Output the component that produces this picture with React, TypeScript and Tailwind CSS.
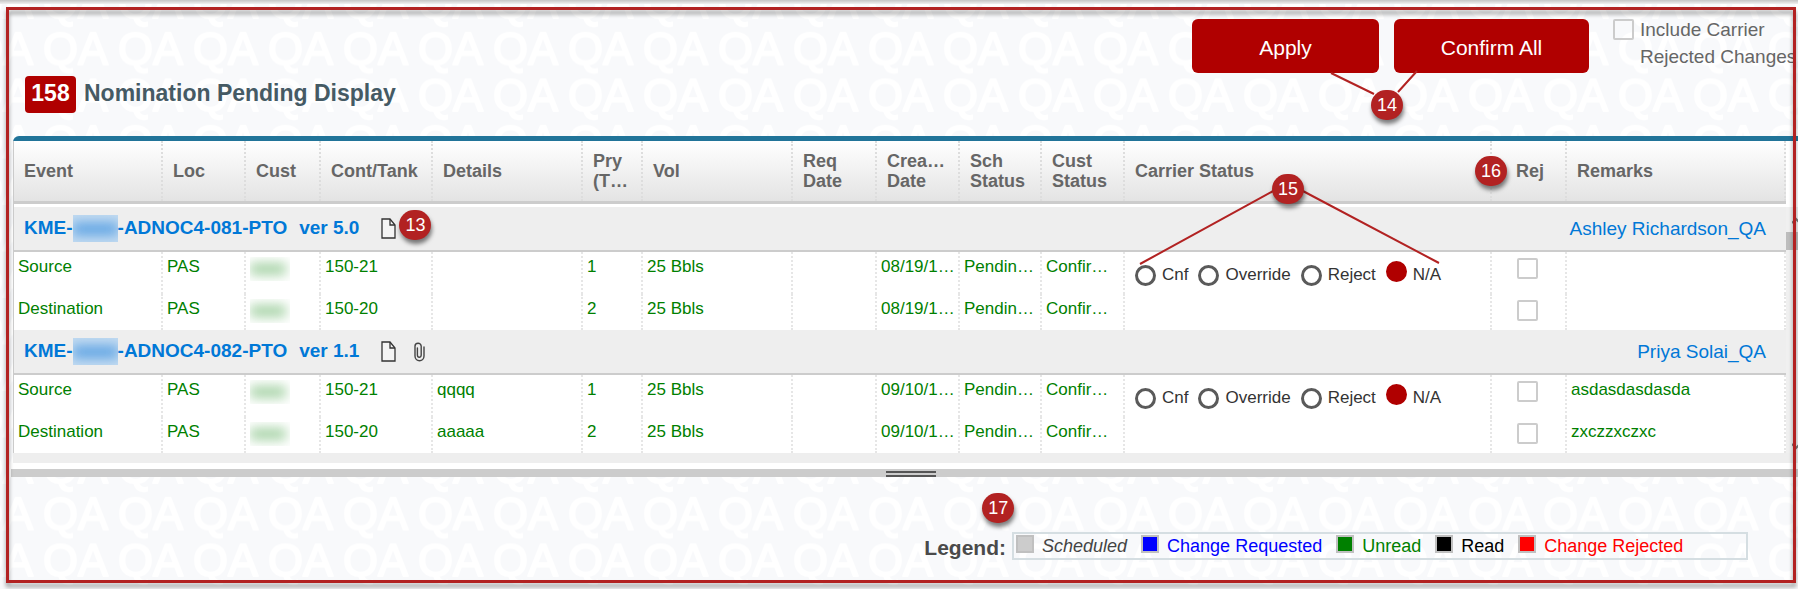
import React from "react"
import { clsx } from "clsx"

type Leg = {
  event: string
  loc: string
  tank: string
  details?: string
  pry: string
  vol: string
  created: string
  remarks?: string
}

type Nomination = {
  id: string
  version: string
  owner: string
  hasAttachment?: boolean
  callout?: string
  legs: Leg[]
}

const COLUMNS = [
  { label: "Event", width: "w-[149px]" },
  { label: "Loc", width: "w-[83px]" },
  { label: "Cust", width: "w-[75px]" },
  { label: "Cont/Tank", width: "w-[112px]" },
  { label: "Details", width: "w-[150px]" },
  { label: "Pry (T…", width: "w-[60px]" },
  { label: "Vol", width: "w-[150px]" },
  { label: "Req Date", width: "w-[84px]" },
  { label: "Crea… Date", width: "w-[83px]" },
  { label: "Sch Status", width: "w-[82px]" },
  { label: "Cust Status", width: "w-[83px]" },
  { label: "Carrier Status", width: "w-[367px]" },
  { label: "Rej", width: "w-[75px]" },
  { label: "Remarks", width: "" },
]

const NOMINATIONS: Nomination[] = [
  {
    id: "-ADNOC4-081-PTO",
    version: "ver 5.0",
    owner: "Ashley Richardson_QA",
    callout: "13",
    legs: [
      { event: "Source", loc: "PAS", tank: "150-21", pry: "1", vol: "25 Bbls", created: "08/19/1…" },
      { event: "Destination", loc: "PAS", tank: "150-20", pry: "2", vol: "25 Bbls", created: "08/19/1…" },
    ],
  },
  {
    id: "-ADNOC4-082-PTO",
    version: "ver 1.1",
    owner: "Priya Solai_QA",
    hasAttachment: true,
    legs: [
      { event: "Source", loc: "PAS", tank: "150-21", details: "qqqq", pry: "1", vol: "25 Bbls", created: "09/10/1…", remarks: "asdasdasdasda" },
      { event: "Destination", loc: "PAS", tank: "150-20", details: "aaaaa", pry: "2", vol: "25 Bbls", created: "09/10/1…", remarks: "zxczzxczxc" },
    ],
  },
]

const CARRIER_OPTIONS = ["Cnf", "Override", "Reject", "N/A"]

const LEGEND = [
  { label: "Scheduled", swatch: "bg-[#cccccc]", text: "text-[#444444] italic" },
  { label: "Change Requested", swatch: "bg-[#0000ff]", text: "text-[#0000ff]" },
  { label: "Unread", swatch: "bg-[#008000]", text: "text-[#008000]" },
  { label: "Read", swatch: "bg-black", text: "text-black" },
  { label: "Change Rejected", swatch: "bg-[#ff0000]", text: "text-[#ff0000]" },
]

const CHECKBOX =
  "block size-[21px] shrink-0 appearance-none rounded-xs border-2 border-[#cccccc] checked:bg-[#b00000]"

export default function App() {
  return (
    <div className="relative isolate flex min-h-screen flex-col overflow-hidden bg-[#f8f9fb] font-['Liberation_Sans',Arial,sans-serif] text-[#666666]">
      <Watermark />
      <Header />
      <main className="relative">
        <NominationTable />
        <Splitter />
      </main>
      <Legend />
      <div className="pointer-events-none absolute inset-x-0 top-0 h-1 bg-gradient-to-b from-[#c4c4c4] to-[#f0f0f0]" />
      <div className="pointer-events-none absolute top-[7px] right-[2px] bottom-[7px] left-[6px] border-3 border-[#b22222] drop-shadow-[0_4px_2px_rgba(0,0,0,0.4)]" />
    </div>
  )
}

function Watermark() {
  return (
    <svg className="absolute inset-0 -z-10 size-full" aria-hidden="true">
      <defs>
        <pattern id="qa" x="42" y="20" width="75" height="46.5" patternUnits="userSpaceOnUse">
          <text
            x="1"
            y="45"
            fontSize="45"
            fill="#fff"
            stroke="#fff"
            strokeWidth="2"
            strokeLinejoin="round"
          >
            QA
          </text>
          <text x="1" y="-1.5" fontSize="45" fill="#fff" stroke="#fff" strokeWidth="2">
            QA
          </text>
        </pattern>
      </defs>
      <rect width="100%" height="100%" fill="url(#qa)" />
    </svg>
  )
}

function Callout({ label, className }: { label: string; className?: string }) {
  return (
    <span
      className={clsx(
        "absolute z-20 flex h-[30px] w-8 items-center justify-center rounded-full bg-[#b22222] text-lg font-normal text-white shadow-[1px_4px_4px_rgba(0,0,0,0.5)]",
        className
      )}
    >
      {label}
    </span>
  )
}

function Header() {
  return (
    <header className="pt-[19px] pb-[23px]">
      <div className="flex justify-end">
        <div className="relative flex gap-[15px] text-[21px] text-white">
          <button className="h-[54px] w-[187px] rounded-md bg-[#b00000] pt-1">Apply</button>
          <button className="h-[54px] w-[195px] rounded-md bg-[#b00000] pt-1">Confirm All</button>
          <svg
            className="pointer-events-none absolute top-0 left-0 z-10 h-[90px] w-full"
            stroke="#b22222"
            strokeWidth="2"
            aria-hidden="true"
          >
            <path d="M139 54 L182 75 M225 52 L206 73" />
          </svg>
          <Callout label="14" className="top-[71px] left-[179px]" />
        </div>
        <label className="ml-6 flex w-[185px] gap-[6px] text-[19px] leading-[27px] whitespace-nowrap">
          <input type="checkbox" className={CHECKBOX} />
          <span className="-mt-[3px]">
            Include Carrier
            <br />
            Rejected Changes
          </span>
        </label>
      </div>
      <div className="mt-[3px] flex items-center gap-2 pl-[25px] text-[23px] font-bold">
        <span className="flex h-[37px] w-[51px] items-center justify-center rounded bg-[#b00000] pb-[2px] text-white">
          158
        </span>
        <h1 className="pb-[2px] text-[#455a64]">Nomination Pending Display</h1>
      </div>
    </header>
  )
}

function NominationTable() {
  return (
    <div className="ml-[13px] rounded-tl-md border-t-5 border-[#217499] bg-white pb-[6px]">
      <div className="flex">
        <table className="w-full table-fixed border-separate border-spacing-0 border-l border-[#cccccc] text-left">
          <thead>
            <tr className="h-[63px] bg-gradient-to-b from-white to-[#e2e2e2]">
              {COLUMNS.map(({ label, width }) => (
                <th
                  key={label}
                  className={clsx(
                    "relative border-b-3 border-[#cccccc] text-lg leading-5 font-bold",
                    width,
                    label === "Rej" ? "pl-6" : "px-[10px]",
                    label === "Cont/Tank" && "whitespace-nowrap"
                  )}
                >
                  {label}
                  <span className="absolute inset-y-0 right-0 border-r-2 border-dotted border-[#dddddd]" />
                  {label === "Carrier Status" && <CarrierCallout />}
                  {label === "Rej" && <Callout label="16" className="top-[15px] -left-[17px]" />}
                </th>
              ))}
            </tr>
          </thead>
          <tbody>
            {NOMINATIONS.map((nomination, i) => (
              <NominationGroup key={nomination.id} nomination={nomination} first={i === 0} />
            ))}
          </tbody>
        </table>
        <Scrollbar />
      </div>
      <div className="h-[10px] bg-[#eeeeee]" />
    </div>
  )
}

function CarrierCallout() {
  return (
    <>
      <svg
        className="pointer-events-none absolute top-0 left-0 z-10 h-[130px] w-[330px]"
        stroke="#b22222"
        strokeWidth="2"
        aria-hidden="true"
      >
        <path d="M150 49 L15 123 M176 49 L314 122" />
      </svg>
      <Callout label="15" className="top-[33px] left-[147px]" />
    </>
  )
}

function NominationGroup({ nomination, first }: { nomination: Nomination; first: boolean }) {
  return (
    <>
      <tr>
        <td
          colSpan={COLUMNS.length}
          className={clsx(
            "border-b-2 border-b-[#cccccc] bg-[#eeeeee] p-0 text-[19px]",
            first && "border-t-3 border-t-white"
          )}
        >
          <div className="flex h-[43px] items-center pr-5 pl-[10px]">
            <a href="#" className="flex items-center font-bold text-[#0078d7]">
              KME-
              <Redacted tone="blue" />
              {nomination.id}
              <span className="ml-3">{nomination.version}</span>
            </a>
            <div className="relative ml-[22px] flex items-center gap-[18px]">
              <FileIcon />
              {nomination.hasAttachment && <ClipIcon />}
              {nomination.callout && (
                <Callout label={nomination.callout} className="-top-2 left-[18px]" />
              )}
            </div>
            <a href="#" className="ml-auto pt-[2px] text-[#0078d7]">
              {nomination.owner}
            </a>
          </div>
        </td>
      </tr>
      {nomination.legs.map((leg, i) => (
        <LegRow key={leg.event} leg={leg} group={nomination.id} first={i === 0} />
      ))}
    </>
  )
}

function LegRow({ leg, group, first }: { leg: Leg; group: string; first: boolean }) {
  const cell =
    "overflow-hidden border-r-2 border-dotted border-[#e6e6e6] bg-white pt-[5px] pl-1 align-top whitespace-nowrap"
  return (
    <tr className={clsx("text-[17px] leading-5 text-[#008000]", first ? "h-[42px]" : "h-9")}>
      <td className={cell}>{leg.event}</td>
      <td className={cell}>{leg.loc}</td>
      <td className={cell}>
        <Redacted tone="green" />
      </td>
      <td className={cell}>{leg.tank}</td>
      <td className={cell}>{leg.details}</td>
      <td className={cell}>{leg.pry}</td>
      <td className={cell}>{leg.vol}</td>
      <td className={cell} />
      <td className={cell}>{leg.created}</td>
      <td className={cell}>Pendin…</td>
      <td className={cell}>Confir…</td>
      <td className={clsx(cell, "text-[#333333]")}>
        {first && <CarrierStatus name={`carrier${group}`} />}
      </td>
      <td className={cell}>
        <input
          type="checkbox"
          aria-label={`Reject ${leg.event}`}
          className={clsx(CHECKBOX, "mt-px ml-[21px]")}
        />
      </td>
      <td className={cell}>{leg.remarks}</td>
    </tr>
  )
}

function CarrierStatus({ name }: { name: string }) {
  return (
    <div className="flex gap-[10px] pt-1 pl-[6px]">
      {CARRIER_OPTIONS.map((option) => (
        <label key={option} className="flex h-[25px] items-center gap-[6px]">
          <input
            type="radio"
            name={name}
            defaultChecked={option === "N/A"}
            className="size-[21px] appearance-none self-end rounded-full border-3 border-[#5a5a5a] checked:self-start checked:border-[#b00000] checked:bg-[#b00000]"
          />
          <span className="pt-[2px]">{option}</span>
        </label>
      ))}
    </div>
  )
}

/** Blurred out company code */
function Redacted({ tone }: { tone: "blue" | "green" }) {
  return tone === "blue" ? (
    <span className="flex h-[27px] w-[45px] items-center overflow-hidden bg-[#c3dbf1]">
      <span className="h-3 w-full bg-[#5ca2e3] blur-[6px]" />
    </span>
  ) : (
    <span className="flex h-6 w-10 items-center overflow-hidden bg-white">
      <span className="h-3 w-9 bg-[#a5d2a5] blur-[6px]" />
    </span>
  )
}

function FileIcon() {
  return (
    <svg width="15" height="21" viewBox="0 0 15 21" fill="none" stroke="#333" strokeWidth="1.3" aria-hidden="true">
      <path d="M1 1 H9 L14 7 V20 H1 Z" fill="#f4f4f4" />
      <path d="M9 1 V7 H14" />
    </svg>
  )
}

function ClipIcon() {
  return (
    <svg width="11" height="20" viewBox="0 0 11 20" fill="none" stroke="#444" strokeWidth="1.4" strokeLinecap="round" aria-hidden="true">
      <path d="M3.4 6 V13 C3.4 16 7.2 16 7.2 13 V4.2 C7.2 0.2 1 0.2 1 4.2 V14 C1 20.4 10 20.4 10 14 V5" />
    </svg>
  )
}

function Scrollbar() {
  return (
    <div className="mt-[66px] w-3 shrink-0 overflow-hidden bg-[#f0f0f0]" aria-hidden="true">
      <div className="h-[25px]">
        <svg className="ml-[6px] h-[25px] w-3" fill="none" stroke="#777" strokeWidth="2">
          <path d="M0 16 L4 12 L8 16" />
        </svg>
      </div>
      <div className="h-[18px] bg-[#bdbdbd]" />
      <svg className="mt-[190px] ml-[6px] h-3 w-3" fill="none" stroke="#777" strokeWidth="2">
        <path d="M0 4 L4 8 L8 4" />
      </svg>
    </div>
  )
}

function Splitter() {
  return (
    <div className="ml-[11px] flex h-2 justify-center bg-[#cccccc] pl-3">
      <div className="mt-[2px] h-[6px] w-[50px] border-y-2 border-[#555555]" />
    </div>
  )
}

function Legend() {
  return (
    <footer className="relative flex justify-end pt-[54px] pr-[50px] pb-[30px]">
      <div className="relative flex items-center gap-[6px]">
        <h2 className="pt-[5px] text-[21px] leading-6 font-bold text-[#4a4a4a]">Legend:</h2>
        <ul className="flex h-7 w-[736px] items-center gap-[14px] border-2 border-[#d5dee2] pl-[2px] text-lg leading-6">
          {LEGEND.map(({ label, swatch, text }) => (
            <li key={label} className="flex items-center gap-2">
              <span className={clsx("mb-1 size-[18px] border-2 border-[#c0c0c0]", swatch)} />
              <span className={text}>{label}</span>
            </li>
          ))}
        </ul>
        <Callout label="17" className="-top-[38px] left-[58px]" />
      </div>
    </footer>
  )
}
